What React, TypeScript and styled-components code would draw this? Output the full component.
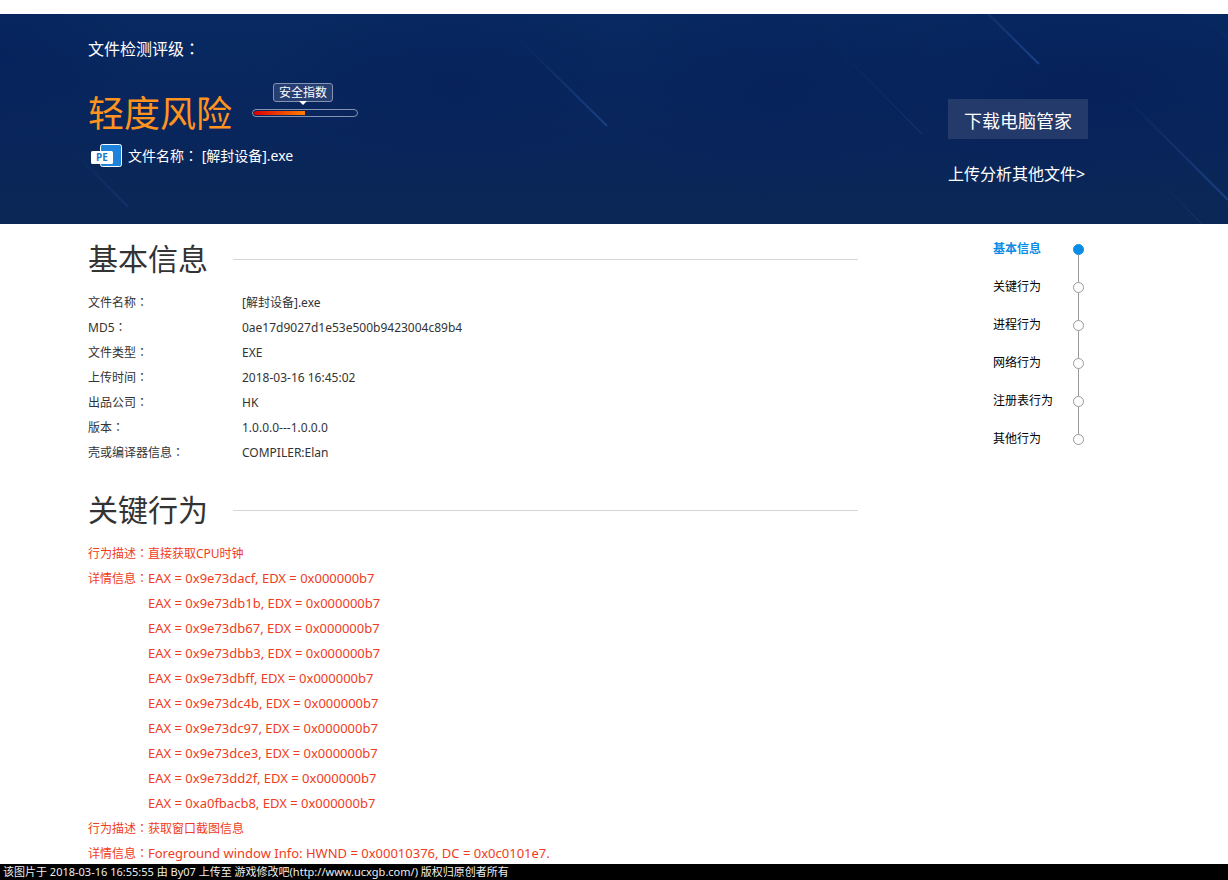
import React from "react";
import styled, { createGlobalStyle } from "styled-components";

const sans = `"Noto Sans", "Noto Sans CJK SC", sans-serif`;

const GlobalStyle = createGlobalStyle`
  *, *::before, *::after { box-sizing: border-box; }
  body { margin: 0; background: #fff; color: #333; font: 12px/20px ${sans}; }
  h1, h2, p, ul, dl, dd { margin: 0; padding: 0; font-weight: 400; }
  ul { list-style: none; }
  a { color: inherit; text-decoration: none; }
`;

const Page = styled.div`
  display: flex;
  flex-direction: column;
  min-height: 100vh;
  padding-top: 14px;
`;

const Hero = styled.header`
  position: relative;
  display: flex;
  justify-content: space-between;
  min-height: 210px;
  padding: 23px 140px 0 88px;
  color: #fff;
  background:
    radial-gradient(ellipse 190px 90px at 37% 32%, #051f5a99, transparent),
    radial-gradient(ellipse 170px 110px at 63% 34%, #051f5a99, transparent),
    radial-gradient(ellipse 300px 110px at 88% 32%, #041d5899, transparent),
    radial-gradient(ellipse 140px 90px at 0% 20%, #051f5a99, transparent),
    linear-gradient(#082962, #09265c 55%, #0b2755);
`;

const Streaks = styled.svg`
  position: absolute;
  inset: 0;
  width: 100%;
  height: 100%;
`;

const Rating = styled.div`
  position: relative;
  display: flex;
  flex-direction: column;
`;

const RatingLabel = styled.p`
  font-size: 16px;
  line-height: 24px;
`;

const RatingRow = styled.div`
  display: flex;
  align-items: center;
  gap: 20px;
  margin-top: 33px;
`;

const RatingValue = styled.h1`
  color: #ff931e;
  font-size: 36px;
  line-height: 40px;
`;

const Meter = styled.div`
  position: relative;
  width: 106px;
  height: 8px;
  margin-bottom: 2px;
  padding: 1px;
  border: 1px solid #8493b1;
  border-radius: 4px;
`;

const MeterFill = styled.div`
  height: 4px;
  border-radius: 2px 0 0 2px;
  background: linear-gradient(90deg, #dc0000, #ff7f00);
`;

const MeterTip = styled.span`
  position: absolute;
  left: 20px;
  bottom: 14px;
  width: 60px;
  border: 1px solid #8493b1;
  border-radius: 3px;
  background: #263e70;
  font-size: 12px;
  line-height: 17px;
  text-align: center;

  &::after {
    content: "";
    position: absolute;
    top: 100%;
    left: 25px;
    border: 4px solid transparent;
    border-top-color: #fff;
    border-bottom-width: 0;
  }
`;

const FileRow = styled.div`
  display: flex;
  align-items: center;
  gap: 6px;
  margin-top: 10px;
  font-size: 14px;
  line-height: 24px;
`;

const Actions = styled.div`
  position: relative;
  width: 140px;
  padding-top: 62px;
`;

const DownloadButton = styled.button`
  display: block;
  width: 100%;
  height: 40px;
  padding: 4px 0 0;
  border: 0;
  background: #243a6b;
  color: #fff;
  font: 18px/36px ${sans};
  cursor: pointer;
`;

const UploadLink = styled.a`
  display: block;
  margin-top: 23px;
  font-size: 16px;
  line-height: 24px;
  white-space: nowrap;
`;

const Main = styled.main`
  display: flex;
  flex: 1;
  align-items: flex-start;
  padding: 6px 140px 0 88px;
`;

const Report = styled.div`
  display: flex;
  flex: 1;
  flex-direction: column;
  gap: 25px;
  padding-top: 9px;
`;

const SectionTitle = styled.h2`
  display: flex;
  align-items: center;
  gap: 25px;
  font-size: 30px;
  line-height: 40px;

  &::after {
    content: "";
    flex: 1;
    height: 1px;
    background: #d6d6d6;
  }
`;

const InfoTable = styled.table`
  margin-top: 11px;
  border-collapse: collapse;

  th, td { height: 25px; padding: 0; font-weight: 400; text-align: left; }
  th { width: 154px; }
`;

const Behaviors = styled.dl`
  display: grid;
  grid-template-columns: 60px 1fr;
  grid-auto-rows: 20px;
  row-gap: 5px;
  margin-top: 14px;
  color: #f03c22;

  dt { white-space: nowrap; }
  dd { grid-column: 2; }
`;

const Detail = styled.dd`
  font-size: 13px;
  line-height: 18px;
`;

const WideColon = styled.span`
  font-family: "Noto Sans CJK TC", sans-serif;
  line-height: 1;
`;

const SideNav = styled.nav`
  width: 95px;
  margin-left: 135px;
`;

const NavItem = styled.a<{ $active?: boolean }>`
  position: relative;
  display: grid;
  grid-template-columns: 80px 11px;
  align-items: center;
  height: 38px;
  color: ${(p) => (p.$active ? "#0a8ce6" : "#000")};
  font-weight: ${(p) => (p.$active ? 700 : 400)};

  &::after {
    content: "";
    width: 11px;
    height: 11px;
    border: 1px solid ${(p) => (p.$active ? "#0a8ce6" : "#999")};
    border-radius: 50%;
    background: ${(p) => (p.$active ? "#0a8ce6" : "#fff")};
  }

  li:not(:last-child) > &::before {
    content: "";
    position: absolute;
    top: 25px;
    left: 85px;
    width: 1px;
    height: 27px;
    background: #999;
  }
`;

const Stamp = styled.footer`
  padding-left: 3px;
  background: #000;
  color: #eee;
  font-size: 11px;
  line-height: 16px;
`;

const streaks = [
  { x1: 518, y1: 24, x2: 607, y2: 112, w: 2, o: 0.9 },
  { x1: 823, y1: 20, x2: 922, y2: 120, w: 1, o: 0.7 },
  { x1: 960, y1: -28, x2: 1039, y2: 50, w: 2, o: 1 },
  { x1: 1205, y1: 2, x2: 1250, y2: 47, w: 1, o: 0.6 },
  { x1: 1125, y1: 83, x2: 1228, y2: 186, w: 2, o: 0.9 },
  { x1: 1158, y1: 166, x2: 1202, y2: 210, w: 1, o: 0.6 },
  { x1: 70, y1: 134, x2: 128, y2: 193, w: 2, o: 0.4 },
];

const info = [
  ["文件名称", "[解封设备].exe"],
  ["MD5", "0ae17d9027d1e53e500b9423004c89b4"],
  ["文件类型", "EXE"],
  ["上传时间", "2018-03-16 16:45:02"],
  ["出品公司", "HK"],
  ["版本", "1.0.0.0---1.0.0.0"],
  ["壳或编译器信息", "COMPILER:Elan"],
];

const behaviors = [
  {
    title: "直接获取CPU时钟",
    details: [
      "EAX = 0x9e73dacf, EDX = 0x000000b7",
      "EAX = 0x9e73db1b, EDX = 0x000000b7",
      "EAX = 0x9e73db67, EDX = 0x000000b7",
      "EAX = 0x9e73dbb3, EDX = 0x000000b7",
      "EAX = 0x9e73dbff, EDX = 0x000000b7",
      "EAX = 0x9e73dc4b, EDX = 0x000000b7",
      "EAX = 0x9e73dc97, EDX = 0x000000b7",
      "EAX = 0x9e73dce3, EDX = 0x000000b7",
      "EAX = 0x9e73dd2f, EDX = 0x000000b7",
      "EAX = 0xa0fbacb8, EDX = 0x000000b7",
    ],
  },
  {
    title: "获取窗口截图信息",
    details: ["Foreground window Info: HWND = 0x00010376, DC = 0x0c0101e7."],
  },
];

const navItems = ["基本信息", "关键行为", "进程行为", "网络行为", "注册表行为", "其他行为"];

const Colon = () => <WideColon lang="zh-TW">：</WideColon>;

const PeIcon = () => (
  <svg width="34" height="24" viewBox="0 0 34 24" aria-hidden="true">
    <rect x="12.5" y="0.5" width="21" height="22" rx="2" fill="#1f82dc" stroke="#fff" />
    <rect x="3" y="7" width="22" height="13" rx="1.5" fill="#fff" />
    <text x="14" y="17" textAnchor="middle" fontFamily="Noto Sans, sans-serif" fontSize="10" fontWeight="700" fill="#1f78cc">
      PE
    </text>
  </svg>
);

export default function App() {
  const score = 50;
  return (
    <Page lang="zh-CN">
      <GlobalStyle />
      <Hero>
        <Streaks viewBox="0 0 1228 210" preserveAspectRatio="xMidYMid slice" aria-hidden="true">
          {streaks.map((s, i) => (
            <g key={i}>
              <linearGradient id={`streak${i}`} gradientUnits="userSpaceOnUse" x1={s.x1} y1={s.y1} x2={s.x2} y2={s.y2}>
                <stop offset="0" stopColor="#1b4285" stopOpacity="0" />
                <stop offset="1" stopColor="#1b4285" stopOpacity={s.o} />
              </linearGradient>
              <line x1={s.x1} y1={s.y1} x2={s.x2} y2={s.y2} stroke={`url(#streak${i})`} strokeWidth={s.w} />
            </g>
          ))}
        </Streaks>
        <Rating>
          <RatingLabel>文件检测评级<Colon /></RatingLabel>
          <RatingRow>
            <RatingValue>轻度风险</RatingValue>
            <Meter>
              <MeterFill style={{ width: `${score}%` }} />
              <MeterTip>安全指数</MeterTip>
            </Meter>
          </RatingRow>
          <FileRow>
            <PeIcon />
            <span>文件名称<Colon /> [解封设备].exe</span>
          </FileRow>
        </Rating>
        <Actions>
          <DownloadButton type="button">下载电脑管家</DownloadButton>
          <UploadLink href="#upload">上传分析其他文件&gt;</UploadLink>
        </Actions>
      </Hero>
      <Main>
        <Report>
          <section id="sec0">
            <SectionTitle>基本信息</SectionTitle>
            <InfoTable>
              <tbody>
                {info.map(([label, value]) => (
                  <tr key={label}>
                    <th scope="row">{label}<Colon /></th>
                    <td>{value}</td>
                  </tr>
                ))}
              </tbody>
            </InfoTable>
          </section>
          <section id="sec1">
            <SectionTitle>关键行为</SectionTitle>
            <Behaviors>
              {behaviors.map((b) => (
                <React.Fragment key={b.title}>
                  <dt>行为描述<Colon /></dt>
                  <dd>{b.title}</dd>
                  <dt>详情信息<Colon /></dt>
                  {b.details.map((d) => (
                    <Detail key={d}>{d}</Detail>
                  ))}
                </React.Fragment>
              ))}
            </Behaviors>
          </section>
        </Report>
        <SideNav>
          <ul>
            {navItems.map((label, i) => (
              <li key={label}>
                <NavItem href={`#sec${i}`} $active={i === 0}>{label}</NavItem>
              </li>
            ))}
          </ul>
        </SideNav>
      </Main>
      <Stamp>该图片于 2018-03-16 16:55:55 由 By07 上传至 游戏修改吧(http://www.ucxgb.com/) 版权归原创者所有</Stamp>
    </Page>
  );
}
